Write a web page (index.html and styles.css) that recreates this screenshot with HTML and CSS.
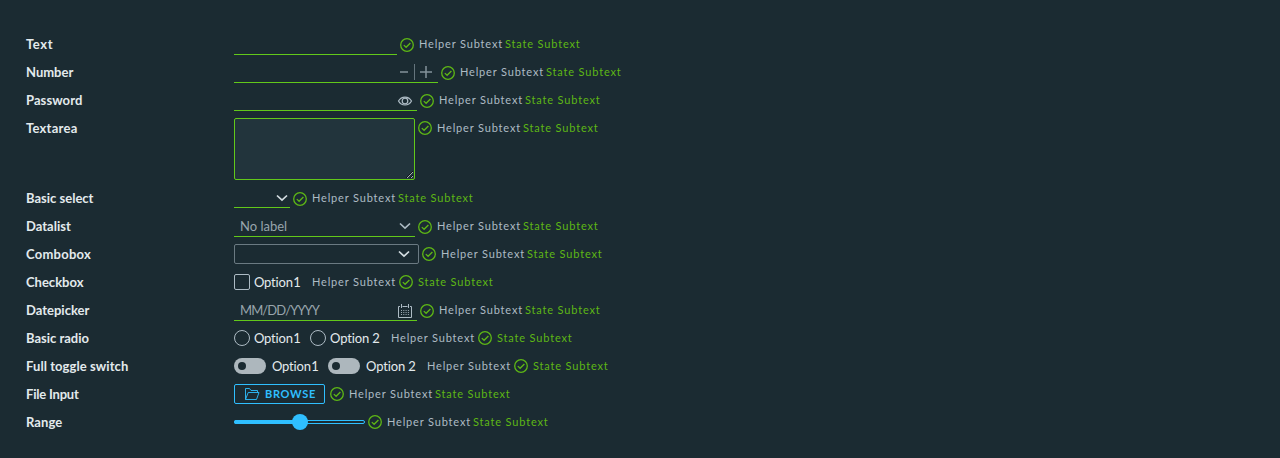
FILE: index.html
```html
<!DOCTYPE html>
<html lang="en">
<head>
<meta charset="utf-8">
<title>Form</title>
<link rel="stylesheet" href="styles.css">
</head>
<body>
<svg width="0" height="0" class="defs">
<symbol id="ok" viewBox="0 0 14 14"><circle cx="7" cy="7" r="6.3"/><path d="M3.8 7.1 6.1 9.3 10.4 5"/></symbol>
<symbol id="chev" viewBox="0 0 12 8"><path d="M1 1.5 6 6.2 11 1.5"/></symbol>
</svg>
<form class="form">
<div class="row"><label class="label text">Text</label><div class="field line w163"></div><svg class="ok low"><use href="#ok"/></svg><span class="helper">Helper Subtext</span><span class="state">State Subtext</span></div>
<div class="row"><label class="label">Number</label><div class="field line w204"><svg class="steps" viewBox="0 0 32 16"><path d="M0 8h8M20 8h12M26 2v12"/><path class="bar" d="M14.5 0v16"/></svg></div><svg class="ok low"><use href="#ok"/></svg><span class="helper">Helper Subtext</span><span class="state">State Subtext</span></div>
<div class="row"><label class="label spaced">Password</label><div class="field line w183"><svg class="eye" viewBox="0 0 16 12"><path d="M1.5 6C4.4 .7 11.6 .7 14.5 6 11.6 11.3 4.4 11.3 1.5 6Z"/><circle cx="8" cy="6" r="2.8"/></svg></div><svg class="ok low"><use href="#ok"/></svg><span class="helper">Helper Subtext</span><span class="state">State Subtext</span></div>
<div class="row tall"><label class="label wide">Textarea</label><textarea class="area"></textarea><svg class="ok"><use href="#ok"/></svg><span class="helper">Helper Subtext</span><span class="state">State Subtext</span></div>
<div class="row"><label class="label">Basic select</label><div class="field line select w56"><svg class="chev"><use href="#chev"/></svg></div><svg class="ok low"><use href="#ok"/></svg><span class="helper">Helper Subtext</span><span class="state">State Subtext</span></div>
<div class="row"><label class="label">Datalist</label><div class="field line w181"><span class="hint nolabel">No label</span><svg class="chev thin"><use href="#chev"/></svg></div><svg class="ok low"><use href="#ok"/></svg><span class="helper">Helper Subtext</span><span class="state">State Subtext</span></div>
<div class="row"><label class="label wide">Combobox</label><div class="field combo"><svg class="chev"><use href="#chev"/></svg></div><svg class="ok"><use href="#ok"/></svg><span class="helper">Helper Subtext</span><span class="state">State Subtext</span></div>
<div class="row"><label class="label">Checkbox</label><span class="box"></span><span class="option one">Option 1</span><span class="helper first">Helper Subtext</span><svg class="ok"><use href="#ok"/></svg><span class="state after">State Subtext</span></div>
<div class="row"><label class="label">Datepicker</label><div class="field line w183"><span class="hint date">MM/DD/YYYY</span><svg class="cal" viewBox="0 0 16 16"><path d="M3 3.5H1.5v11h13v-11H13M5.5 3.5h5M4.5 1v4M11.5 1v4"/><path class="dots" d="M4 7.5h9M4 9.5h9M4 11.5h9"/></svg></div><svg class="ok low"><use href="#ok"/></svg><span class="helper">Helper Subtext</span><span class="state">State Subtext</span></div>
<div class="row"><label class="label">Basic radio</label><span class="box round"></span><span class="option one">Option 1</span><span class="box round next"></span><span class="option two">Option 2</span><span class="helper first">Helper Subtext</span><svg class="ok"><use href="#ok"/></svg><span class="state after">State Subtext</span></div>
<div class="row"><label class="label spaced">Full toggle switch</label><span class="toggle"></span><span class="option one">Option 1</span><span class="toggle next"></span><span class="option two">Option 2</span><span class="helper first">Helper Subtext</span><svg class="ok"><use href="#ok"/></svg><span class="state after">State Subtext</span></div>
<div class="row"><label class="label file-label">File Input</label><button type="button" class="browse"><svg class="folder" viewBox="0 0 16 14"><path d="M1.5 12.5V1.5H5.5L7 3.5H13.5V5.5M1.5 12.5 4.2 5.5H15L12.5 12.5Z"/></svg><span class="browse-text">BROWSE</span></button><svg class="ok file"><use href="#ok"/></svg><span class="helper">Helper Subtext</span><span class="state">State Subtext</span></div>
<div class="row"><label class="label spaced">Range</label><svg class="range" viewBox="0 0 131 16"><rect class="track" x=".5" y="6.5" width="130" height="3" rx="1.5"/><rect x="0" y="6" width="66" height="4" rx="2"/><circle cx="66" cy="8" r="8"/></svg><svg class="ok"><use href="#ok"/></svg><span class="helper">Helper Subtext</span><span class="state">State Subtext</span></div>
</form>
</body>
</html>
```
FILE: styles.css
```css
* { box-sizing: border-box; }
body { margin: 0; min-height: 458px; background: #1b2b32; font-family: Lato, sans-serif; color: #e3eaed; }
.defs { display: block; height: 0; }
.form { padding: 30px 26px; }
.row { display: flex; align-items: center; height: 28px; white-space: nowrap; }
.row > * { flex: none; }
.tall { height: 70px; align-items: flex-start; padding-top: 4px; }
.tall .label, .tall .helper, .tall .state { line-height: 20px; }
.tall .ok { margin-top: 3px; }
.label { width: 208px; font-size: 13px; font-weight: 700; line-height: 20px; }
.spaced { letter-spacing: .08px; }
.wide { letter-spacing: .25px; }
.text { letter-spacing: .6px; }
.file-label { letter-spacing: -.2px; }
.field { display: flex; align-items: center; justify-content: flex-end; height: 20px; }
.line { height: 21px; margin-top: 1px; border-bottom: 1px solid #62c81a; }
.w163 { width: 163px; }
.w204 { width: 204px; padding-right: 6px; }
.w183 { width: 183px; padding-right: 4px; }
.w181 { width: 181px; padding-right: 4px; }
.w56 { width: 56px; padding-right: 2px; }
.select { height: 20px; margin-top: 0; }
.combo { width: 185px; padding-right: 8px; border: 1px solid #6b7a82; border-radius: 2px; }
.area { width: 181px; height: 62px; margin: 0; background: #22343c; border: 1px solid #62c81a; border-radius: 2px; resize: both; }
.ok { width: 14px; height: 14px; margin-left: 3px; fill: none; stroke: #5eb715; stroke-width: 1.3; }
.low { margin-top: 2px; }
.file { margin-left: 5px; }
.helper, .state { font-size: 11px; line-height: 20px; letter-spacing: .83px; }
.helper { width: 86px; margin-left: 5px; color: #adbbc4; }
.state { color: #5eb715; }
.helper.first { width: 84px; margin-left: 11px; }
.after { margin-left: 5px; }
.chev { width: 12px; height: 8px; fill: none; stroke: #d4dde1; stroke-width: 1.7; }
.thin { stroke: #adbbc4; stroke-width: 1.6; }
.steps { width: 32px; height: 16px; fill: none; stroke: #84939a; stroke-width: 1.5; }
.bar { stroke: #65757d; stroke-width: 1; }
.eye { width: 16px; height: 12px; margin-top: 1px; fill: none; stroke: #adbbc4; stroke-width: 1.2; }
.cal { width: 16px; height: 16px; margin-top: 1px; fill: none; stroke: #adbbc4; }
.dots { stroke-dasharray: 1 1.3; stroke-width: .9; }
.hint { margin: 0 auto 0 6px; font-size: 13px; line-height: 20px; color: #98a5ac; }
.date { letter-spacing: -.9px; }
.box { width: 16px; height: 16px; border: 1px solid #adbbc4; border-radius: 2px; }
.round { border-radius: 50%; }
.option { margin-left: 4px; font-size: 13px; line-height: 20px; }
.one { width: 47px; letter-spacing: -.2px; word-spacing: -2.5px; }
.two { width: 50px; letter-spacing: -.12px; }
.next { margin-left: 9px; }
.toggle { width: 32px; height: 16px; padding: 4px; border-radius: 8px; background: #adb7bd; }
.toggle::before { content: ""; display: block; width: 8px; height: 8px; border-radius: 50%; background: #1b2b32; }
.toggle + .option { margin-left: 6px; }
.browse { display: flex; align-items: center; width: 91px; height: 20px; padding: 0 0 0 9px; border: 1px solid #2fbfff; border-radius: 2px; background: none; color: #2fbfff; font: 700 11px/18px Lato, sans-serif; }
.folder { width: 16px; height: 14px; fill: none; stroke: #2fbfff; stroke-width: .9; }
.browse-text { margin-left: 5px; letter-spacing: .7px; }
.range { width: 131px; height: 16px; fill: #2fbfff; }
.track { fill: none; stroke: #2fbfff; }
```
